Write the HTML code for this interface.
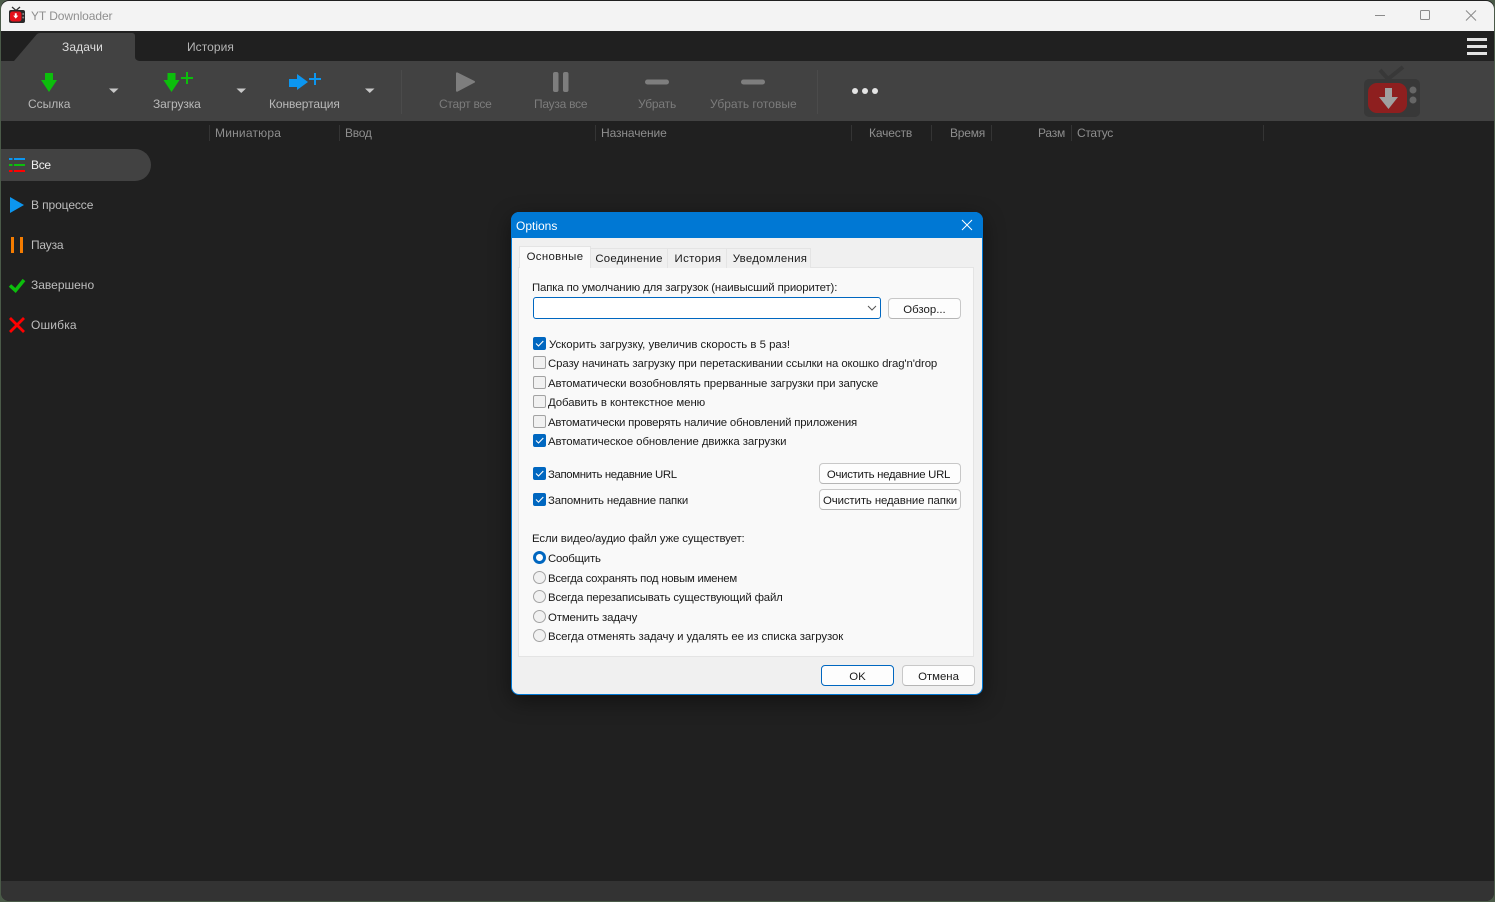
<!DOCTYPE html>
<html lang="ru"><head><meta charset="utf-8"><title>YT Downloader</title>
<style>
html,body{margin:0;padding:0;width:1495px;height:902px;overflow:hidden;background:#4a5a48}
body{position:relative;font-family:"Liberation Sans","Noto Sans CJK SC",sans-serif;font-size:12px}
div,span,svg{position:absolute;box-sizing:border-box}
.t{white-space:nowrap;line-height:16px;height:16px}
#win{left:1px;top:0;width:1493px;height:901px;border-radius:8px 8px 8px 8px;overflow:hidden;background:#202020}
.tb{color:#b9b9b9;font-size:12px}
.dis{color:#7c7c7c}
.hd{color:#8e8e8e;font-size:12px;top:125px}
.sep{width:1px;background:#343434;top:125px;height:16px}
.side{color:#bdbdbd;left:31px}
.d{color:#1b1b1b;font-size:11.4px}
.cb{left:533px;width:13px;height:13px;border-radius:2px;background:#f1f1f1;border:1px solid #a3a3a3}
.cb.on{background:#0067c0;border-color:#0067c0}
.rb{left:533px;width:13px;height:13px;border-radius:50%;background:#f1f1f1;border:1px solid #a3a3a3}
.btn{background:#fdfdfd;border:1px solid #c8c8c8;border-bottom-color:#b5b5b5;border-radius:4px;color:#1b1b1b;text-align:center;font-size:11.4px;line-height:22px;white-space:nowrap}
.tab{background:#f0f0f0;border:1px solid #e4e4e4;color:#1b1b1b;text-align:center;font-size:11.4px;line-height:20px;border-bottom:none}
</style></head><body>
<div id="win" style="left:1px;top:0"></div>

<!-- title bar -->
<div style="left:1px;top:1px;width:1493px;height:30px;background:#f3f3f3;border-radius:8px 8px 0 0"></div>
<svg style="left:8px;top:6px" width="18" height="18" viewBox="0 0 18 18">
<path d="M4 1l4 3.5L12 1" fill="none" stroke="#333" stroke-width="1.3"/>
<rect x="1" y="4" width="16" height="13" rx="2" fill="#2a2a2a"/>
<rect x="2" y="5.5" width="11.5" height="10" rx="2.5" fill="#e3101a"/>
<path d="M6.8 7.3h1.9v2.3h1.6l-2.55 3-2.55-3h1.6z" fill="#fff"/>
<circle cx="15.2" cy="8" r="1" fill="#888"/><circle cx="15.2" cy="11.5" r="1" fill="#888"/>
</svg>
<span class="t" style="left:31px;top:8px;color:#8f8f8f;font-size:12px;letter-spacing:-.08px">YT Downloader</span>
<svg style="left:1370px;top:5px" width="110" height="20" viewBox="0 0 110 20" fill="none" stroke="#8a8a8a" stroke-width="1">
<path d="M5 10.5h10"/><rect x="50.5" y="5.5" width="9" height="9" rx="1"/><path d="M96 5.5l10 10M106 5.5l-10 10"/>
</svg>

<!-- tabs -->
<svg style="left:1px;top:31px" width="140" height="30" viewBox="0 0 140 30">
<path d="M12 30h1L36 3Q37.5 2 39 2H131q3 0 3 3V26q0 3 4 4H12z" fill="#424242"/>
</svg>
<span class="t" style="left:62px;top:39px;color:#dcdcdc;font-size:12px;letter-spacing:.1px">Задачи</span>
<span class="t" style="left:187px;top:39px;color:#b5b5b5;font-size:12px;letter-spacing:.05px">История</span>
<svg style="left:1467px;top:38px" width="20" height="17" viewBox="0 0 20 17" fill="#e2e2e2">
<rect width="20" height="3"/><rect y="7" width="20" height="3"/><rect y="14" width="20" height="3"/>
</svg>

<!-- toolbar -->
<div style="left:1px;top:61px;width:1493px;height:60px;background:#424242"></div>
<svg style="left:0;top:61px" width="1495" height="60" viewBox="0 61 1495 60">
<path d="M45 73h8v7h4l-8 12-8-12h4z" fill="#0cbe0c"/>
<path d="M167.500 73h8v7h4l-8 12-8-12h4z" fill="#0cbe0c"/>
<path d="M187 72v12M181 78h12" stroke="#0cbe0c" stroke-width="2"/>
<path d="M289 79h8v-5l11 8-11 8v-3h-8z" fill="#0c96f0"/>
<path d="M315 73v12M309 79h12" stroke="#0c96f0" stroke-width="2"/>
<path d="M109 88.500h9.500l-4.750 4.500zM236.500 88.500h9.500l-4.750 4.500zM365 88.500h9.500l-4.750 4.500z" fill="#c8c8c8"/>
<rect x="401" y="70" width="1" height="44" fill="#4b4b4b"/>
<rect x="817" y="70" width="1" height="44" fill="#4b4b4b"/>
<path d="M456 73.500q0-1.500 1.500-1l17 8.500q1 .8 0 1.600l-17 9q-1.500 .5-1.500-1z" fill="#7e7e7e"/>
<rect x="553" y="72" width="5.500" height="20" rx="2" fill="#7e7e7e"/>
<rect x="563" y="72" width="5.500" height="20" rx="2" fill="#7e7e7e"/>
<rect x="645" y="79.500" width="24" height="5" rx="2.500" fill="#7e7e7e"/>
<rect x="741" y="79.500" width="24" height="5" rx="2.500" fill="#7e7e7e"/>
<circle cx="855" cy="91" r="3" fill="#e4e4e4"/><circle cx="865" cy="91" r="3" fill="#e4e4e4"/><circle cx="875" cy="91" r="3" fill="#e4e4e4"/>
<path d="M1380 70l8 9 15-12" fill="none" stroke="#383838" stroke-width="4"/>
<rect x="1364" y="79" width="56" height="38" rx="5" fill="#383838"/>
<rect x="1368" y="83" width="39" height="30" rx="9" fill="#8e1f1f"/>
<path d="M1385 88h7v9h6l-9.500 12-9.500-12h6z" fill="#a0a0a0"/>
<circle cx="1413" cy="90" r="3.500" fill="#666"/><circle cx="1413" cy="100" r="3.500" fill="#666"/>
</svg>
<span class="t tb" style="left:28px;top:96px">Ссылка</span>
<span class="t tb" style="left:153px;top:96px;letter-spacing:-.1px">Загрузка</span>
<span class="t tb" style="left:269px;top:96px;letter-spacing:-.08px">Конвертация</span>
<span class="t tb dis" style="left:439px;top:96px;letter-spacing:-.25px">Старт все</span>
<span class="t tb dis" style="left:534px;top:96px;letter-spacing:-.25px">Пауза все</span>
<span class="t tb dis" style="left:638px;top:96px;letter-spacing:-.17px">Убрать</span>
<span class="t tb dis" style="left:710px;top:96px">Убрать готовые</span>

<!-- main -->
<div style="left:1px;top:121px;width:1493px;height:760px;background:#202020"></div>
<div style="left:1px;top:881px;width:1493px;height:20px;background:#333;border-radius:0 0 8px 8px"></div>

<!-- columns -->
<div class="sep" style="left:209px"></div><div class="sep" style="left:339px"></div>
<div class="sep" style="left:595px"></div><div class="sep" style="left:851px"></div>
<div class="sep" style="left:931px"></div><div class="sep" style="left:991px"></div>
<div class="sep" style="left:1071px"></div><div class="sep" style="left:1263px"></div>
<span class="t hd" style="left:215px;letter-spacing:.2px">Миниатюра</span>
<span class="t hd" style="left:345px;letter-spacing:-.25px">Ввод</span>
<span class="t hd" style="left:601px;letter-spacing:-.1px">Назначение</span>
<span class="t hd" style="left:869px;letter-spacing:-.15px">Качеств</span>
<span class="t hd" style="left:950px;letter-spacing:-.2px">Время</span>
<span class="t hd" style="left:1038px;letter-spacing:-.2px">Разм</span>
<span class="t hd" style="left:1077px;letter-spacing:-.33px">Статус</span>

<!-- sidebar -->
<div style="left:1px;top:149px;width:150px;height:32px;background:#424242;border-radius:0 16px 16px 0"></div>
<svg style="left:0;top:149px" width="30" height="190" viewBox="0 149 30 190">
<path d="M9 159h3.500M14 159h11" stroke="#0c96f0" stroke-width="2"/>
<path d="M9 165h3.500M14 165h11" stroke="#0cbe0c" stroke-width="2"/>
<path d="M9 171h3.500M14 171h11" stroke="#f00" stroke-width="2"/>
<path d="M10 197l14 8-14 8z" fill="#0c96f0"/>
<rect x="11" y="237" width="3" height="16" fill="#f57c00"/><rect x="20" y="237" width="3" height="16" fill="#f57c00"/>
<path d="M10 285.500l5.500 5 8.500-10.500" fill="none" stroke="#0cbe0c" stroke-width="3.500"/>
<path d="M10 318l14 14M24 318l-14 14" stroke="#f00" stroke-width="2.800"/>
</svg>
<span class="t side" style="top:157px;color:#f0f0f0;letter-spacing:-.3px">Все</span>
<span class="t side" style="top:197px;letter-spacing:-.1px">В процессе</span>
<span class="t side" style="top:237px;letter-spacing:-.2px">Пауза</span>
<span class="t side" style="top:277px">Завершено</span>
<span class="t side" style="top:317px;letter-spacing:.17px">Ошибка</span>

<!-- dialog -->
<div style="left:511px;top:212px;width:472px;height:483px;background:#f0f0f0;border:1px solid #0078d4;border-radius:8px;box-shadow:0 6px 22px rgba(0,0,0,.45)"></div>
<div style="left:511px;top:212px;width:472px;height:26px;background:#0078d4;border-radius:8px 8px 0 0"></div>
<span class="t" style="left:516px;top:218px;color:#fff;font-size:12px">Options</span>
<svg style="left:961px;top:219px" width="12" height="12" viewBox="0 0 12 12"><path d="M1 1l10 10M11 1L1 11" stroke="#fff" stroke-width="1"/></svg>

<div style="left:518px;top:267px;width:456px;height:390px;background:#f9f9f9;border:1px solid #e4e4e4"></div>
<div class="tab" style="left:590px;top:248px;width:78px;height:20px;letter-spacing:.2px">Соединение</div>
<div class="tab" style="left:667px;top:248px;width:60px;height:20px;letter-spacing:.4px;padding-left:2px">История</div>
<div class="tab" style="left:726px;top:248px;width:85px;height:20px;letter-spacing:.3px;padding-left:3px">Уведомления</div>
<div class="tab" style="left:519px;top:246px;width:72px;height:22px;background:#f9f9f9;line-height:20px;letter-spacing:.35px">Основные</div>

<span class="t d" style="left:532px;top:280px;letter-spacing:-.13px">Папка по умолчанию для загрузок (наивысший приоритет):</span>
<div style="left:533px;top:297px;width:348px;height:22px;background:#fff;border:1px solid #0067c0;border-radius:3px"></div>
<svg style="left:867px;top:305px" width="10" height="7" viewBox="0 0 10 7"><path d="M1 1l4 4 4-4" fill="none" stroke="#555" stroke-width="1"/></svg>
<div class="btn" style="left:888px;top:298px;width:73px;height:21px">Обзор...</div>

<div class="cb on" style="top:337px"></div>
<div class="cb" style="top:356px"></div>
<div class="cb" style="top:376px"></div>
<div class="cb" style="top:395px"></div>
<div class="cb" style="top:415px"></div>
<div class="cb on" style="top:434px"></div>
<div class="cb on" style="top:467px"></div>
<div class="cb on" style="top:493px"></div>
<svg style="left:533px;top:337px" width="13" height="170" viewBox="0 0 13 170" fill="none" stroke="#fff" stroke-width="1.100">
<path d="M3 6.500l2.500 2.500 4.800-5M3 103.500l2.500 2.500 4.800-5M3 136.500l2.500 2.500 4.800-5M3 162.500l2.500 2.500 4.800-5"/>
</svg>
<span class="t d" style="left:549px;top:337px">Ускорить загрузку, увеличив скорость в 5 раз!</span>
<span class="t d" style="left:548px;top:356px;letter-spacing:-.11px">Сразу начинать загрузку при перетаскивании ссылки на окошко drag'n'drop</span>
<span class="t d" style="left:548px;top:376px;letter-spacing:-.1px">Автоматически возобновлять прерванные загрузки при запуске</span>
<span class="t d" style="left:548px;top:395px;letter-spacing:-.07px">Добавить в контекстное меню</span>
<span class="t d" style="left:548px;top:415px;letter-spacing:-.19px">Автоматически проверять наличие обновлений приложения</span>
<span class="t d" style="left:548px;top:434px;letter-spacing:-.07px">Автоматическое обновление движка загрузки</span>
<span class="t d" style="left:548px;top:467px;letter-spacing:-.37px">Запомнить недавние URL</span>
<span class="t d" style="left:548px;top:493px;letter-spacing:-.17px">Запомнить недавние папки</span>
<div class="btn" style="left:819px;top:463px;width:142px;height:21px;letter-spacing:-.28px;padding-right:3px">Очистить недавние URL</div>
<div class="btn" style="left:819px;top:489px;width:142px;height:21px;letter-spacing:-.1px">Очистить недавние папки</div>

<span class="t d" style="left:532px;top:531px;letter-spacing:-.11px">Если видео/аудио файл уже существует:</span>
<div class="rb" style="top:551px;background:#fff;border:3.500px solid #0067c0"></div>
<div class="rb" style="top:571px"></div>
<div class="rb" style="top:590px"></div>
<div class="rb" style="top:610px"></div>
<div class="rb" style="top:629px"></div>
<span class="t d" style="left:548px;top:551px;letter-spacing:-.2px">Сообщить</span>
<span class="t d" style="left:548px;top:571px;letter-spacing:-.26px">Всегда сохранять под новым именем</span>
<span class="t d" style="left:548px;top:590px;letter-spacing:-.15px">Всегда перезаписывать существующий файл</span>
<span class="t d" style="left:548px;top:610px;letter-spacing:-.13px">Отменить задачу</span>
<span class="t d" style="left:548px;top:629px;letter-spacing:-.07px">Всегда отменять задачу и удалять ее из списка загрузок</span>

<div class="btn" style="left:821px;top:665px;width:73px;height:21px;border-color:#0067c0">OK</div>
<div class="btn" style="left:902px;top:665px;width:73px;height:21px">Отмена</div>
</body></html>
